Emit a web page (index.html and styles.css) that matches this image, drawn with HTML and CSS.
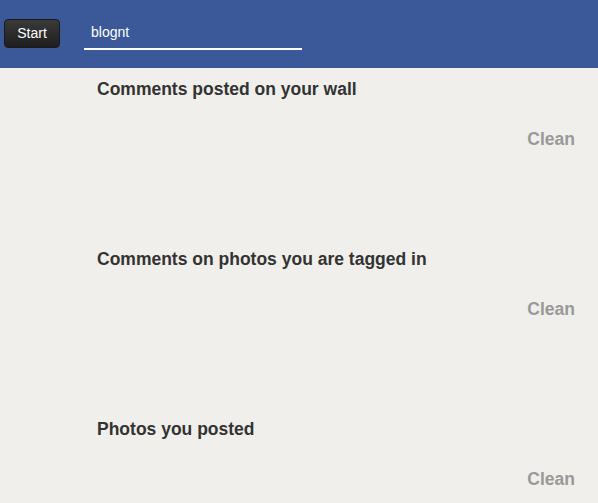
FILE: index.html
```html
<!DOCTYPE html>
<html>
<head>
<meta charset="utf-8">
<link rel="stylesheet" href="styles.css">
</head>
<body>
<header class="topbar">
  <button class="start-btn">Start</button>
  <div class="search">blognt</div>
</header>
<main class="content">
  <section class="group">
    <h2 class="group-title">Comments posted on your wall</h2>
    <div class="group-actions"><span class="clean">Clean</span></div>
  </section>
  <section class="group">
    <h2 class="group-title">Comments on photos you are tagged in</h2>
    <div class="group-actions"><span class="clean">Clean</span></div>
  </section>
  <section class="group last">
    <h2 class="group-title">Photos you posted</h2>
    <div class="group-actions"><span class="clean">Clean</span></div>
  </section>
</main>
</body>
</html>
```
FILE: styles.css
```css
html, body {
  margin: 0;
  padding: 0;
}
body {
  background: #f0efeb;
  font-family: "Liberation Sans", Arial, sans-serif;
  overflow: hidden;
}
.topbar {
  height: 68px;
  background: #3b5998;
  display: flex;
  align-items: center;
  padding-left: 4px;
  box-sizing: border-box;
}
.start-btn {
  width: 56px;
  height: 29px;
  margin-top: -2px;
  border: 1px solid #1a1a1a;
  border-radius: 4px;
  background: linear-gradient(#3a3a3a, #1e1e1e);
  color: #fff;
  font-family: "Liberation Sans", Arial, sans-serif;
  font-size: 14px;
  padding: 0;
}
.search {
  margin-left: 24px;
  width: 218px;
  height: 30px;
  box-sizing: border-box;
  border-bottom: 2px solid #fff;
  color: #fff;
  font-size: 14px;
  padding: 4px 0 0 7px;
  margin-top: 2px;
}
.content {
  padding-left: 97px;
  padding-right: 23px;
}
.group {
  height: 170px;
  display: flex;
  flex-direction: column;
}
.group.last {
  height: auto;
}
.group-title {
  margin: 0;
  padding-top: 11px;
  font-size: 17.5px;
  font-weight: bold;
  color: #333;
  line-height: 20px;
}
.group-actions {
  display: flex;
  justify-content: flex-end;
  margin-top: 30px;
}
.clean {
  font-size: 17.5px;
  font-weight: bold;
  color: #999;
  line-height: 20px;
}
```
